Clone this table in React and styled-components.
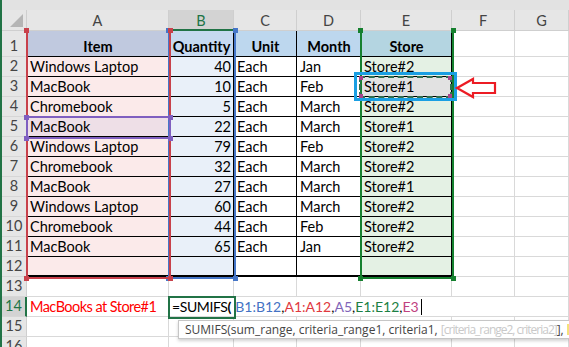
import React from 'react'
import styled, { createGlobalStyle } from 'styled-components'

const GlobalStyle = createGlobalStyle`
  html, body { margin: 0; padding: 0; background: #fff; }
  body { font-family: Lato, "Liberation Sans", sans-serif; }
`

const Window = styled.div`
  width: 569px;
  height: 347px;
  overflow: hidden;
  box-sizing: border-box;
  border-left: 2px solid #217346;
  background: #fff;
`

const TopStrip = styled.div`
  height: 10px;
  background: #e2e2e2;
`

const Sheet = styled.div`
  display: grid;
  grid-template-columns: 25px 142px 65px 63px 64px 91px 63px 1fr;
  grid-template-rows: 21px 26px repeat(16, 20px);
  font-family: Lato, "Liberation Sans", sans-serif;
  font-size: 14.5px;
`

const Corner = styled.div`
  grid-row: 1;
  grid-column: 1;
  background: #e6e6e6;
  border-right: 1px solid #cfcfcf;
  border-bottom: 1px solid #cfcfcf;
  display: flex;
  align-items: flex-end;
  justify-content: flex-end;
  padding: 0 3px 3px 0;
  &::after {
    content: '';
    width: 0;
    height: 0;
    border-left: 13px solid transparent;
    border-bottom: 13px solid #b5b5b5;
  }
`

const ColHead = styled.div`
  grid-row: 1;
  grid-column: ${p => p.$c};
  background: ${p => (p.$active ? '#d3d3d3' : '#e6e6e6')};
  border-right: 1px solid #cfcfcf;
  border-bottom: ${p => (p.$active ? '2px solid #217346' : '1px solid #cfcfcf')};
  color: ${p => (p.$active ? '#217346' : '#444')};
  display: flex;
  align-items: center;
  justify-content: center;
  padding-top: 1px;
`

const RowHead = styled.div`
  grid-row: ${p => p.$r};
  grid-column: 1;
  background: ${p => (p.$active ? '#d3d3d3' : '#e6e6e6')};
  border-right: ${p => (p.$active ? '2px solid #217346' : '1px solid #cfcfcf')};
  border-bottom: 1px solid #d6d6d6;
  color: ${p => (p.$active ? '#217346' : '#444')};
  display: flex;
  align-items: flex-end;
  justify-content: center;
  line-height: 18px;
  padding-bottom: 1px;
`

const Cell = styled.div`
  grid-row: ${p => p.$r};
  grid-column: ${p => p.$c};
  background: ${p => p.$bg || '#fff'};
  border-right: 1px solid ${p => p.$line || '#d9d9d9'};
  border-bottom: ${p => p.$bw || 1}px solid ${p => p.$line || '#d9d9d9'};
  display: flex;
  align-items: flex-end;
  justify-content: ${p => (p.$align === 'right' ? 'flex-end' : p.$align === 'center' ? 'center' : 'flex-start')};
  padding: 0 2px 0 3px;
  line-height: 18px;
  font-weight: ${p => (p.$bold ? 700 : 400)};
  color: ${p => p.$color || '#000'};
  letter-spacing: ${p => p.$tight || 0}px;
  white-space: nowrap;
`

const FormulaCell = styled.div`
  grid-row: 15;
  grid-column: 3 / 8;
  position: relative;
  z-index: 1;
  border-bottom: 1px solid #d9d9d9;
  display: flex;
  align-items: flex-end;
  padding: 0 0 0 3px;
  line-height: 18px;
  font-size: 14px;
  white-space: nowrap;
`

const Ref = styled.span`
  color: ${p => p.$color || '#000'};
  font-weight: ${p => (p.$bold ? 700 : 400)};
  letter-spacing: ${p => p.$tight || 0}px;
  margin-left: ${p => p.$gap || 0}px;
`

const Caret = styled.span`
  display: inline-block;
  width: 1px;
  height: 16px;
  margin: 0 0 1px 2px;
  background: #000;
`

const RangeBox = styled.div`
  grid-row: ${p => p.$r};
  grid-column: ${p => p.$c};
  position: relative;
  z-index: 2;
  margin: 0 -2px -2px -1px;
  border: 2px solid ${p => p.$color};
  border-top: none;
`

const CellBox = styled.div`
  grid-row: ${p => p.$r};
  grid-column: ${p => p.$c};
  position: relative;
  z-index: ${p => p.$z || 3};
  margin: -1px -2px -2px -1px;
  border: 2px solid ${p => p.$color};
`

const Handle = styled.span`
  position: absolute;
  width: 5px;
  height: 5px;
  background: ${p => p.$color};
  ${p => (p.$top ? 'top: -3px;' : 'bottom: -4px;')}
  ${p => (p.$left ? 'left: -4px;' : 'right: -4px;')}
`

const Marquee = styled.div`
  grid-row: 4;
  grid-column: 6;
  position: relative;
  z-index: 3;
  margin: -1px 0 -1px -2px;
  border: 2px dashed #2f6f50;
`

const Dot = styled.span`
  position: absolute;
  width: 4px;
  height: 4px;
  background: #a8428a;
  ${p => (p.$top ? 'top: -2px;' : 'bottom: -2px;')}
  ${p => (p.$left ? 'left: -2px;' : 'right: -2px;')}
`

const CallOut = styled.div`
  grid-row: 4;
  grid-column: 6;
  z-index: 4;
  margin: -5px -5px -4px -7px;
  border: 3px solid #1a9fe3;
`

const Arrow = styled.svg`
  grid-row: 4;
  grid-column: 7;
  align-self: start;
  margin: 1px 0 0 4px;
  z-index: 4;
  overflow: visible;
`

const Tip = styled.div`
  grid-row: 16;
  grid-column: 3 / 9;
  align-self: start;
  z-index: 5;
  margin: 3px 0 0 9px;
  height: 19px;
  box-sizing: border-box;
  background: #fff;
  border: 1px solid #c6c6c6;
  border-right: none;
  box-shadow: 0 2px 3px rgba(0, 0, 0, 0.18);
  font-family: "Open Sans", "Liberation Sans", sans-serif;
  font-size: 12px;
  color: #444;
  padding: 0 0 0 6px;
  line-height: 17px;
  white-space: nowrap;
  overflow: hidden;
`

const Faded = styled.span`
  color: #c9c9c9;
  letter-spacing: -1px;
`

const Flag = styled.span`
  display: inline-block;
  width: 3px;
  height: 11px;
  margin-left: 3px;
  vertical-align: -1px;
  background: #f5e27a;
`

const cols = ['A', 'B', 'C', 'D', 'E', 'F', 'G']
const fills = ['#fbeaea', '#e9f0f9', '#fff', '#fff', '#e4f1e4']
const headFills = ['#c0c9df', '#c6d9f0', '#bdd7ee', '#bdd7ee', '#b4d5e1']

const data = [
  ['Windows Laptop', 40, 'Each', 'Jan', 'Store#2'],
  ['MacBook', 10, 'Each', 'Feb', 'Store#1'],
  ['Chromebook', 5, 'Each', 'March', 'Store#2'],
  ['MacBook', 22, 'Each', 'March', 'Store#1'],
  ['Windows Laptop', 79, 'Each', 'Feb', 'Store#2'],
  ['Chromebook', 32, 'Each', 'March', 'Store#2'],
  ['MacBook', 27, 'Each', 'March', 'Store#1'],
  ['Windows Laptop', 60, 'Each', 'March', 'Store#2'],
  ['Chromebook', 44, 'Each', 'Feb', 'Store#2'],
  ['MacBook', 65, 'Each', 'Jan', 'Store#2'],
]

const headers = ['Item', 'Quantity', 'Unit', 'Month', 'Store']

function Handles({ color }) {
  return (
    <>
      <Handle $color={color} $top $left />
      <Handle $color={color} $top />
      <Handle $color={color} $left />
      <Handle $color={color} />
    </>
  )
}

function tableCells() {
  const out = []
  for (let r = 1; r <= 12; r++) {
    const gr = r + 1
    for (let c = 0; c < 5; c++) {
      let text = ''
      let bg = fills[c]
      let align = c === 1 ? 'right' : 'left'
      let bold = false
      if (r === 1) {
        text = headers[c]
        bg = headFills[c]
        align = 'center'
        bold = true
      } else if (r <= 11) {
        text = data[r - 2][c]
      }
      if (r === 3 && c === 4) bg = '#e2e2e2'
      if (r === 5 && c === 0) bg = '#eedfe7'
      out.push(
        <Cell
          key={`${r}-${c}`}
          $r={gr}
          $c={c + 2}
          $bg={bg}
          $align={align}
          $bold={bold}
          $line="#000"
          $bw={r === 12 ? 2 : 1}
        >
          {text}
        </Cell>
      )
    }
  }
  return out
}

function plainCells() {
  const out = []
  for (let r = 1; r <= 16; r++) {
    const gr = r + 1
    const start = r <= 12 ? 5 : 0
    for (let c = start; c < 7; c++) {
      if (r === 14 && c >= 1 && c <= 5) continue
      const isLabel = r === 14 && c === 0
      out.push(
        <Cell
          key={`p${r}-${c}`}
          $r={gr}
          $c={c + 2}
          $color={isLabel ? '#ff0000' : undefined}
          $tight={isLabel ? -0.55 : 0}
        >
          {isLabel ? 'MacBooks at Store#1' : ''}
        </Cell>
      )
    }
  }
  return out
}

export default function App() {
  return (
    <>
      <GlobalStyle />
      <Window>
        <TopStrip />
        <Sheet>
          <Corner />
          {cols.map((c, i) => (
            <ColHead key={c} $c={i + 2} $active={c === 'B'}>{c}</ColHead>
          ))}
          {Array.from({ length: 16 }, (_, i) => (
            <RowHead key={i} $r={i + 2} $active={i + 1 === 14}>{i + 1}</RowHead>
          ))}

          {tableCells()}
          {plainCells()}

          <CellBox $r={15} $c={3} $color="#217346" $z={0} />

          <FormulaCell>
            <Ref $tight={-0.4}>=SUMIFS</Ref>
            <Ref $bold>(</Ref>
            <Ref $color="#4472c4" $gap={4}>B1:B12</Ref>,
            <Ref $color="#e0393e">A1:A12</Ref>,
            <Ref $color="#8064b8">A5</Ref>,
            <Ref $color="#1d7f44">E1:E12</Ref>,
            <Ref $color="#c0427f">E3</Ref>
            <Caret />
          </FormulaCell>

          <RangeBox $r="2 / 14" $c={3} $color="#4576c8"><Handles color="#4576c8" /></RangeBox>
          <RangeBox $r="2 / 14" $c={2} $color="#c8414b"><Handles color="#c8414b" /></RangeBox>
          <RangeBox $r="2 / 14" $c={6} $color="#15802f"><Handles color="#15802f" /></RangeBox>
          <CellBox $r={6} $c={2} $color="#7f5fc0"><Handles color="#7f5fc0" /></CellBox>

          <Marquee>
            <Dot $top $left />
            <Dot $top />
            <Dot $left />
            <Dot />
          </Marquee>
          <CallOut />
          <Arrow width="41" height="21" viewBox="0 0 41 21">
            <polygon
              points="1,10 17,1 17,5 39,5 39,15 17,15 17,19"
              fill="#fff"
              stroke="#ec1c24"
              strokeWidth="2.2"
              strokeLinejoin="miter"
            />
          </Arrow>

          <Tip>
            SUMIFS(sum_range, criteria_range1, criteria1, <Faded>[criteria_range2, criteria2]</Faded>],<Flag />
          </Tip>
        </Sheet>
      </Window>
    </>
  )
}
